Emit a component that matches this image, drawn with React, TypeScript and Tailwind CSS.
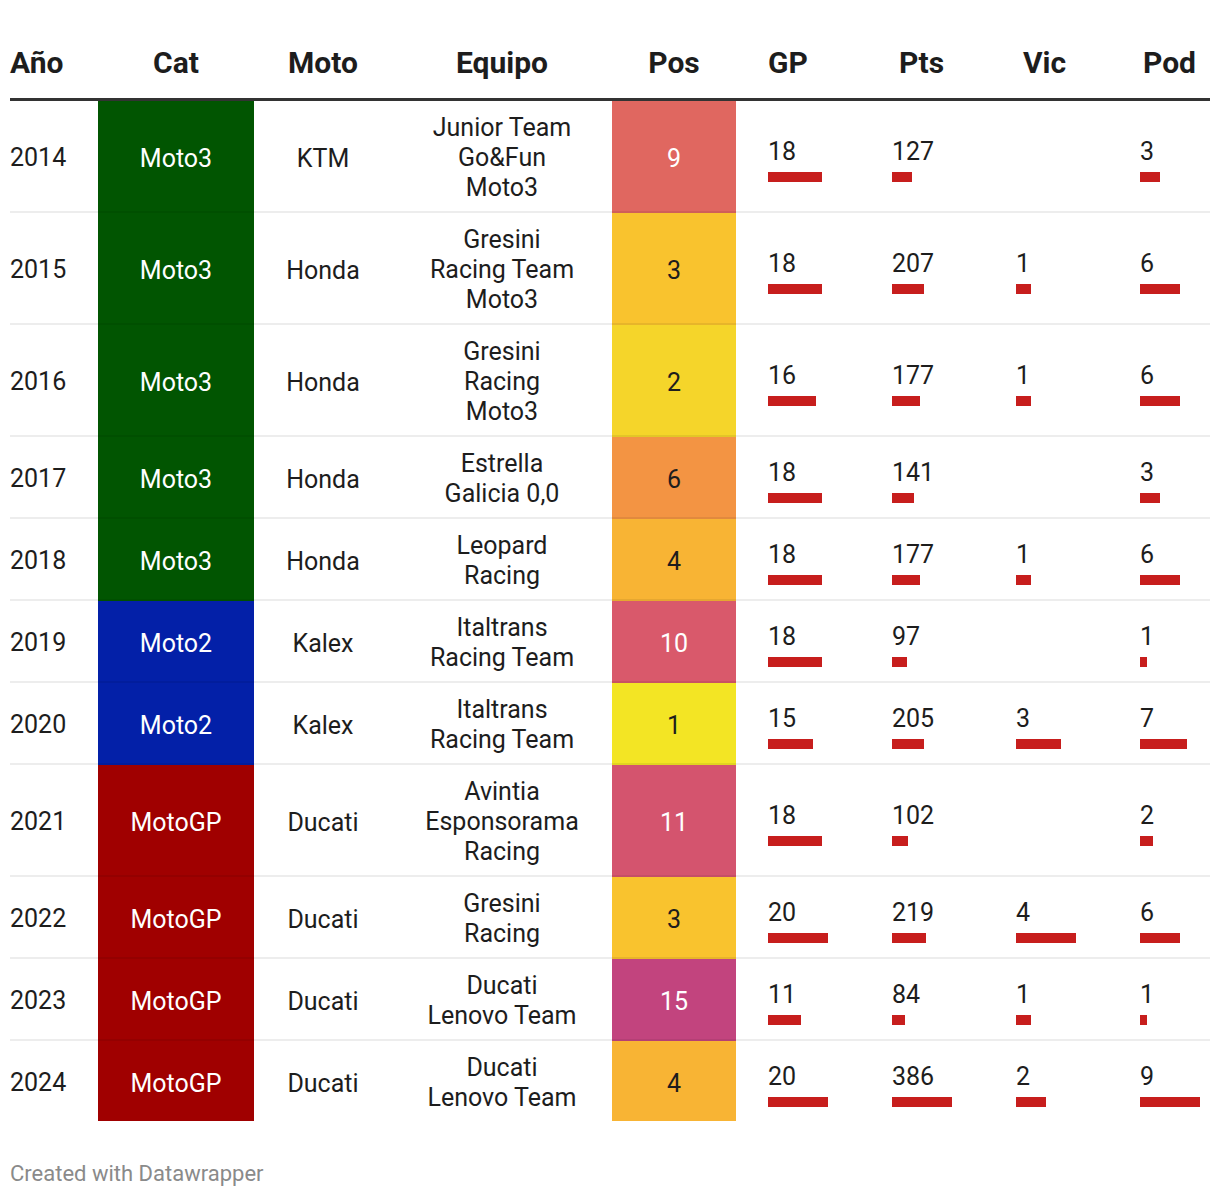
import React from 'react'

type Row = {
  year: number
  cat: 'Moto3' | 'Moto2' | 'MotoGP'
  moto: string
  team: string[]
  pos: number
  gp: number
  pts: number
  vic: number | null
  pod: number
}

const rows: Row[] = [
  { year: 2014, cat: 'Moto3', moto: 'KTM', team: ['Junior Team', 'Go&Fun', 'Moto3'], pos: 9, gp: 18, pts: 127, vic: null, pod: 3 },
  { year: 2015, cat: 'Moto3', moto: 'Honda', team: ['Gresini', 'Racing Team', 'Moto3'], pos: 3, gp: 18, pts: 207, vic: 1, pod: 6 },
  { year: 2016, cat: 'Moto3', moto: 'Honda', team: ['Gresini', 'Racing', 'Moto3'], pos: 2, gp: 16, pts: 177, vic: 1, pod: 6 },
  { year: 2017, cat: 'Moto3', moto: 'Honda', team: ['Estrella', 'Galicia 0,0'], pos: 6, gp: 18, pts: 141, vic: null, pod: 3 },
  { year: 2018, cat: 'Moto3', moto: 'Honda', team: ['Leopard', 'Racing'], pos: 4, gp: 18, pts: 177, vic: 1, pod: 6 },
  { year: 2019, cat: 'Moto2', moto: 'Kalex', team: ['Italtrans', 'Racing Team'], pos: 10, gp: 18, pts: 97, vic: null, pod: 1 },
  { year: 2020, cat: 'Moto2', moto: 'Kalex', team: ['Italtrans', 'Racing Team'], pos: 1, gp: 15, pts: 205, vic: 3, pod: 7 },
  { year: 2021, cat: 'MotoGP', moto: 'Ducati', team: ['Avintia', 'Esponsorama', 'Racing'], pos: 11, gp: 18, pts: 102, vic: null, pod: 2 },
  { year: 2022, cat: 'MotoGP', moto: 'Ducati', team: ['Gresini', 'Racing'], pos: 3, gp: 20, pts: 219, vic: 4, pod: 6 },
  { year: 2023, cat: 'MotoGP', moto: 'Ducati', team: ['Ducati', 'Lenovo Team'], pos: 15, gp: 11, pts: 84, vic: 1, pod: 1 },
  { year: 2024, cat: 'MotoGP', moto: 'Ducati', team: ['Ducati', 'Lenovo Team'], pos: 4, gp: 20, pts: 386, vic: 2, pod: 9 },
]

const catBg = {
  Moto3: 'bg-[#015501]',
  Moto2: 'bg-[#0320a8]',
  MotoGP: 'bg-[#a00000]',
}

const posStyle: Record<number, string> = {
  1: 'bg-[#f3e524] text-[#1d1d1d]',
  2: 'bg-[#f5d52a] text-[#1d1d1d]',
  3: 'bg-[#f9c32e] text-[#1d1d1d]',
  4: 'bg-[#f8b434] text-[#1d1d1d]',
  6: 'bg-[#f39443] text-[#1d1d1d]',
  9: 'bg-[#e06760] text-white',
  10: 'bg-[#d9596b] text-white',
  11: 'bg-[#d4546e] text-white',
  15: 'bg-[#c2447e] text-white',
}

const max = { gp: 20, pts: 386, vic: 4, pod: 9 }

const cols = 'grid grid-cols-[88px_156px_138px_220px_124px_124px_124px_124px_102px]'

function BarCell({ value, top, last }: { value: number | null; top: number; last: boolean }) {
  return (
    <div className={`flex flex-col justify-center pl-[32px] ${last ? '' : 'border-b-2 border-black/[0.07]'}`}>
      {value !== null && (
        <div className="flex flex-col items-start mt-[6px]">
          <span className="leading-[30px]">{value}</span>
          <div className="mt-[5px] h-[10px] bg-[#c71e1d]" style={{ width: Math.round((value / top) * 60) }} />
        </div>
      )}
    </div>
  )
}

export default function App() {
  return (
    <div className="bg-white px-[10px] w-[1220px] font-['Roboto',sans-serif] text-[#1d1d1d]">
      <div className={`${cols} text-[30px] font-bold leading-[36px] pt-[45px] pb-[17px] border-b-[3px] border-[#333]`}>
        <div>Año</div>
        <div className="text-center">Cat</div>
        <div className="text-center">Moto</div>
        <div className="text-center">Equipo</div>
        <div className="text-center">Pos</div>
        <div className="pl-[32px]">GP</div>
        <div className="pl-[39px]">Pts</div>
        <div className="pl-[39px]">Vic</div>
        <div className="pl-[35px]">Pod</div>
      </div>
      <div className="text-[25px]">
        {rows.map((r, i) => {
          const last = i === rows.length - 1
          const line = last ? '' : 'border-b-2 border-black/[0.07]'
          return (
            <div key={r.year} className={cols}>
              <div className={`flex items-center leading-[30px] pt-[14px] pb-[10px] ${line}`}>{r.year}</div>
              <div className={`flex items-center justify-center text-white leading-[30px] pt-[5px] ${catBg[r.cat]} ${line}`}>{r.cat}</div>
              <div className={`flex items-center justify-center leading-[30px] pt-[5px] ${line}`}>{r.moto}</div>
              <div className={`flex flex-col items-center justify-center leading-[30px] pt-[12px] pb-[8px] ${line}`}>
                {r.team.map((t) => (
                  <span key={t}>{t}</span>
                ))}
              </div>
              <div className={`flex items-center justify-center leading-[30px] pt-[5px] ${posStyle[r.pos]} ${line}`}>{r.pos}</div>
              <BarCell value={r.gp} top={max.gp} last={last} />
              <BarCell value={r.pts} top={max.pts} last={last} />
              <BarCell value={r.vic} top={max.vic} last={last} />
              <BarCell value={r.pod} top={max.pod} last={last} />
            </div>
          )
        })}
      </div>
      <div className="mt-[40px] text-[22px] leading-[26px] text-[#8a8a8a]">Created with Datawrapper</div>
    </div>
  )
}
